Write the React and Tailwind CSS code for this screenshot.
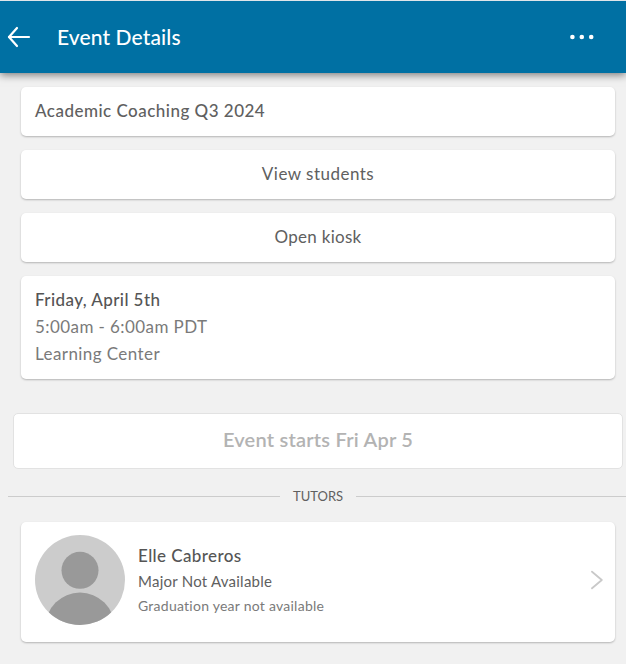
import React from "react";

const eventInfo = {
  name: "Academic Coaching Q3 2024",
  date: "Friday, April 5th",
  time: "5:00am - 6:00am PDT",
  location: "Learning Center",
  status: "Event starts Fri Apr 5",
};

const tutors = [
  {
    name: "Elle Cabreros",
    major: "Major Not Available",
    graduation: "Graduation year not available",
  },
];

const BackIcon = () => (
  <svg width="24" height="22" viewBox="0 0 24 22" fill="none" stroke="#fff" strokeWidth="2.2" strokeLinecap="round" strokeLinejoin="round">
    <path d="M10 2L2 11L10 20" />
    <path d="M2 11H22" />
  </svg>
);

const MoreIcon = () => (
  <svg width="24" height="6" viewBox="0 0 24 6" fill="#fff">
    <circle cx="2.4" cy="3" r="2.3" />
    <circle cx="11.8" cy="3" r="2.3" />
    <circle cx="21.2" cy="3" r="2.3" />
  </svg>
);

const ChevronIcon = () => (
  <svg width="12" height="20" viewBox="0 0 12 20" fill="none" stroke="#c9c9c9" strokeWidth="1.8" strokeLinecap="round" strokeLinejoin="round">
    <path d="M1 1.7L10.8 10L1 18.3" />
  </svg>
);

// grey placeholder shown when a tutor has no photo
const Avatar = () => (
  <svg className="shrink-0" width="90" height="90" viewBox="0 0 90 90">
    <defs>
      <clipPath id="avatar">
        <circle cx="45" cy="45" r="45" />
      </clipPath>
    </defs>
    <g clipPath="url(#avatar)">
      <rect width="90" height="90" fill="#ccc" />
      <circle cx="45" cy="35.3" r="18.5" fill="#999" />
      <circle cx="45" cy="92" r="34.5" fill="#999" />
    </g>
  </svg>
);

const Card = ({ className, children }) => (
  <div className={`rounded-[5px] bg-white shadow-[0_1px_2px_rgba(0,0,0,0.25)] ${className}`}>
    {children}
  </div>
);

const App = () => {
  return (
    <div className="flex h-screen flex-col overflow-hidden bg-[#f1f1f1] font-['Lato',sans-serif] whitespace-nowrap text-[#606060]">
      <header className="z-10 flex h-[73px] shrink-0 items-center border-t border-[#dfe5ea] bg-[#0070a3] pr-8 pl-[7px] text-white shadow-[0_2px_8px_rgba(0,0,0,0.5)]">
        <BackIcon />
        <h1 className="ml-[26px] text-[21px] leading-7 font-medium tracking-[0.12px]">Event Details</h1>
        <button className="ml-auto">
          <MoreIcon />
        </button>
      </header>

      <main className="flex flex-col pt-3.5">
        <div className="mr-[11px] ml-[21px] flex flex-col gap-3.5 text-[17px] leading-[27px] tracking-[0.42px]">
          <Card className="h-[49px] px-3.5 pt-2.5 font-medium tracking-[0.48px]">
            <span>{eventInfo.name}</span>
          </Card>
          <Card className="h-[49px] pt-2.5 text-center tracking-[0.48px]">
            <span>View students</span>
          </Card>
          <Card className="h-[49px] pt-2.5 text-center tracking-[0.3px]">
            <span>Open kiosk</span>
          </Card>
          <Card className="h-[103px] px-3.5 pt-2.5 text-[#7a7a7a]">
            <p className="font-medium text-[#555]">
              <span>{eventInfo.date}</span>
            </p>
            <p>
              <span>{eventInfo.time}</span>
            </p>
            <p>
              <span>{eventInfo.location}</span>
            </p>
          </Card>
        </div>

        <div className="mt-[34px] mr-[3px] ml-[13px] h-14 rounded-[5px] border border-[#e2e2e2] bg-white pt-[11px] text-center text-xl leading-7 font-semibold tracking-[0.22px] text-[#b3b3b3]">
          <span>{eventInfo.status}</span>
        </div>

        <div className="mt-[17px] ml-2 flex h-5 items-center gap-[13px]">
          <div className="h-px w-[272px] bg-[#ccc]" />
          <h2 className="w-[50px] pt-px text-center text-[13px]">
            <span>TUTORS</span>
          </h2>
          <div className="h-px flex-1 bg-[#ccc]" />
        </div>

        {tutors.map((tutor) => (
          <Card key={tutor.name} className="mt-4 mr-[11px] ml-[21px] flex h-[120px] items-center pr-3 pb-1 pl-3.5">
            <Avatar />
            <div className="ml-[13px]">
              <p className="text-[17px] leading-[27px] font-medium tracking-[0.4px] text-[#555]">
                <span>{tutor.name}</span>
              </p>
              <p className="text-[15px] leading-[25px] tracking-[0.24px]">
                <span>{tutor.major}</span>
              </p>
              <p className="text-[14px] leading-6 tracking-[0.25px] text-[#7a7a7a]">
                <span>{tutor.graduation}</span>
              </p>
            </div>
            <div className="ml-auto">
              <ChevronIcon />
            </div>
          </Card>
        ))}
      </main>
    </div>
  );
};

export default App;
